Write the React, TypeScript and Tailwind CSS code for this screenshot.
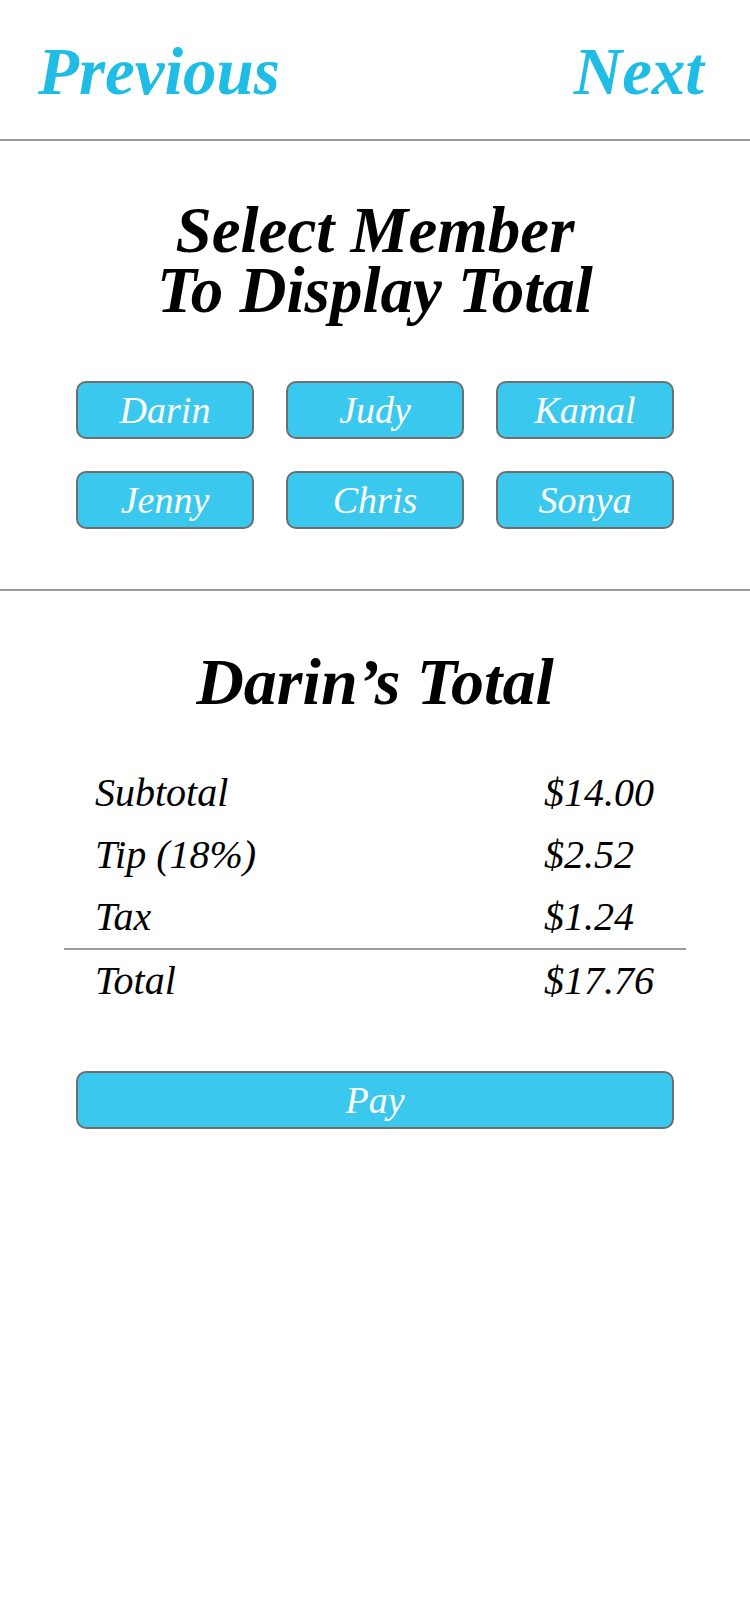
import React from 'react'

const members = ['Darin', 'Judy', 'Kamal', 'Jenny', 'Chris', 'Sonya']

const lines = [
  { label: 'Subtotal', value: '$14.00' },
  { label: 'Tip (18%)', value: '$2.52' },
  { label: 'Tax', value: '$1.24' },
]

const serif = "font-['Liberation_Serif',Georgia,serif] italic"

function MemberButton({ name }: { name: string }) {
  return (
    <button className="flex h-[58px] items-center justify-center rounded-[10px] border-2 border-[#6e6e6e] bg-[#3bc8ee] text-[38px] leading-none text-white">
      {name}
    </button>
  )
}

export default function App() {
  return (
    <div className={`min-h-[1624px] w-[750px] bg-white ${serif}`}>
      {/* Nav */}
      <div className="flex h-[141px] items-center justify-between border-b-2 border-[#9a9a9a] pl-[38px] pr-[46px] pt-[4px]">
        <span className="text-[67px] font-bold leading-none text-[#1fbde6]">Previous</span>
        <span className="text-[67px] font-bold leading-none text-[#1fbde6]">Next</span>
      </div>

      {/* Member picker */}
      <div className="border-b-2 border-[#9a9a9a] pb-[60px]">
        <h1 className="mt-[59px] text-center text-[65px] font-bold leading-[60px] text-black">
          <div>Select Member</div>
          <div>To Display Total</div>
        </h1>
        <div className="mx-auto mt-[61px] grid w-[598px] grid-cols-3 gap-x-[32px] gap-y-[32px]">
          {members.map((m) => (
            <MemberButton key={m} name={m} />
          ))}
        </div>
      </div>

      {/* Totals */}
      <h2 className="mt-[58px] text-center text-[66px] font-bold leading-none text-black">
        Darin’s Total
      </h2>

      <div className="mx-auto mt-[47px] w-[622px] text-[40px] text-black">
        <div className="border-b-2 border-[#9a9a9a]">
          {lines.map((l) => (
            <div key={l.label} className="flex h-[62px] items-center leading-none">
              <span className="flex-1 pl-[31px]">{l.label}</span>
              <span className="w-[142px]">{l.value}</span>
            </div>
          ))}
        </div>
        <div className="flex h-[62px] items-center leading-none">
          <span className="flex-1 pl-[31px]">Total</span>
          <span className="w-[142px]">$17.76</span>
        </div>
      </div>

      <div className="mx-auto mt-[59px] w-[598px]">
        <button className="flex h-[58px] w-full items-center justify-center rounded-[10px] border-2 border-[#6e6e6e] bg-[#3bc8ee] text-[38px] leading-none text-white">
          Pay
        </button>
      </div>
    </div>
  )
}
